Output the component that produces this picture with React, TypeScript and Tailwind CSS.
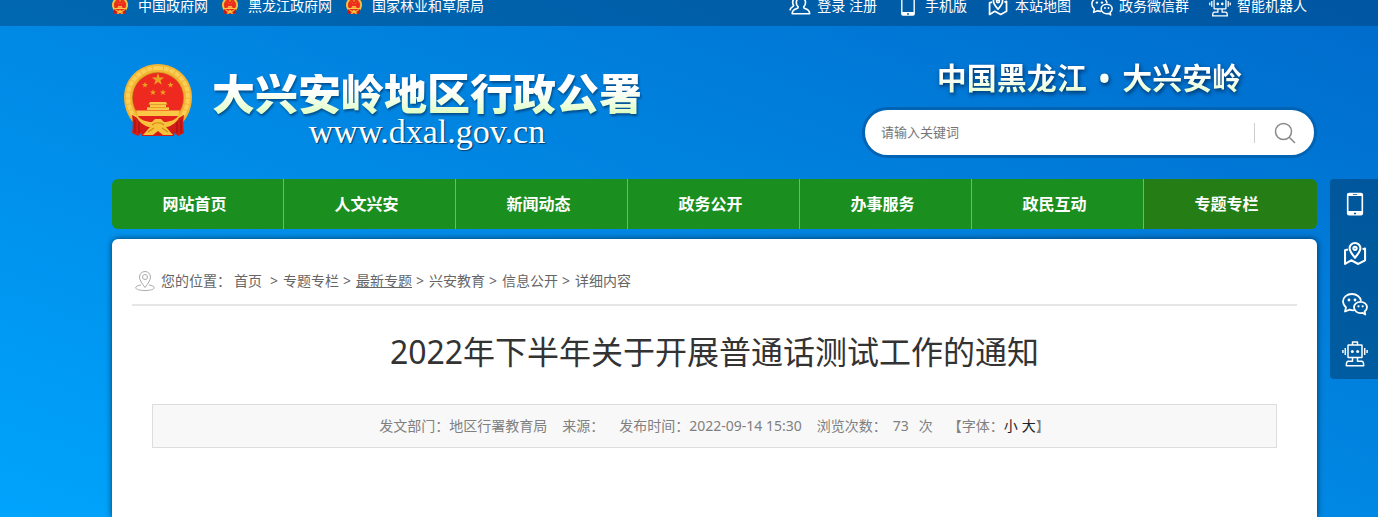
import React from "react";

const topLinks = ["中国政府网", "黑龙江政府网", "国家林业和草原局"];

const navItems = ["网站首页", "人文兴安", "新闻动态", "政务公开", "办事服务", "政民互动", "专题专栏"];

const crumbs = ["专题专栏", "最新专题", "兴安教育", "信息公开", "详细内容"];

type IconProps = { className?: string };

const star = (cx: number, cy: number, r: number) =>
  Array.from({ length: 10 }, (_, i) => {
    const radius = i % 2 === 0 ? r : r * 0.4;
    const angle = (Math.PI / 5) * i - Math.PI / 2;
    return `${cx + radius * Math.cos(angle)},${cy + radius * Math.sin(angle)}`;
  }).join(" ");

const Emblem = ({ className }: IconProps) => (
  <svg viewBox="0 0 68 74" className={className} aria-hidden="true">
    <path d="M34 0C53 0 68 15 68 33c0 13-6 24-15 31H15C6 57 0 46 0 33 0 15 15 0 34 0Z" fill="#f3b433" />
    <path d="M34 4C50 4 64 16 64 33c0 11-5 20-12 26M34 4C18 4 4 16 4 33c0 11 5 20 12 26" fill="none" stroke="#fbcf55" strokeWidth="4" strokeDasharray="5 1" />
    <circle cx="34" cy="34" r="26" fill="#c98a1c" />
    <circle cx="34" cy="34" r="25.3" fill="#ee2a20" />
    <polygon points={star(34, 15.5, 6.5)} fill="#e7a51f" />
    <polygon points={star(21, 21, 3.2)} fill="#e7a51f" />
    <polygon points={star(46.5, 21, 3.2)} fill="#e7a51f" />
    <polygon points={star(29, 28.5, 3.2)} fill="#e7a51f" />
    <polygon points={star(39, 28.5, 3.2)} fill="#e7a51f" />
    <path d="M26 38h16l1.5 2.5H42V43h3v3H23v-3h3v-2.500h-1.5Z" fill="#fbc744" />
    <path d="M25 40.500h18M23 43.500h22" stroke="#d98f22" strokeWidth=".7" />
    <path d="M12 46.500h44l-2 5.500H14Z" fill="#fbc744" />
    <path d="M14 52h40c-3 5-9 8-20 8s-17-3-20-8Z" fill="#e3221b" />
    <path d="M8 51c5 2 10 7 14 9-1 5-4 9-8 12l-6-3c1-6 1-12 0-18ZM60 51c-5 2-10 7-14 9 1 5 4 9 8 12l6-3c-1-6-1-12 0-18Z" fill="#d31c17" />
    <path d="M11 56v13M15 58v11M57 56v13M53 58v11" stroke="#8f0f12" strokeWidth=".8" />
    <path d="M16 60c6 3 12 3 18 3s12 0 18-3l-2 12H18Z" fill="#d31c17" />
    <path d="M12 51c5 5 10 7 16 7l3-3h6l3 3c6 0 11-2 16-7-2 7-8 11-14 12l7 8H39l-5-4-5 4H19l7-8c-6-1-12-5-14-12Z" fill="#f8c23c" />
    <path d="M28 61c3-3 9-3 12 0M24 68l6-4M44 68l-6-4" fill="none" stroke="#d18a1c" strokeWidth="1.2" />
  </svg>
);

const UserIcon = ({ className }: IconProps) => (
  <svg viewBox="0 0 24 24" className={className} fill="none" stroke="currentColor" strokeWidth="1.8" strokeLinejoin="round" aria-hidden="true">
    <path d="M10 13C7 10.500 7 3 13 3s6 7.500 3 10c0 1.200.5 1.600 2 2 3.500 1 4.500 2.500 4.500 5.500h-19c0-3 1-4.500 4.500-5.500 1.500-.4 2-.8 2-2Z" />
    <path d="M6.500 4C3.500 5 3.500 9 5 11.500c0 1.500-3 1.500-3.800 4.500" strokeLinecap="round" />
  </svg>
);

const PhoneIcon = ({ className }: IconProps) => (
  <svg viewBox="0 0 24 24" className={className} aria-hidden="true">
    <path fillRule="evenodd" fill="currentColor" d="M6.500 1.500h11a2 2 0 0 1 2 2v17a2 2 0 0 1-2 2h-11a2 2 0 0 1-2-2v-17a2 2 0 0 1 2-2ZM6 4.500V18.500h12v-14Zm4-1.700v.7h4v-.7ZM11 20v1.500h2V20Z" />
  </svg>
);

const MapIcon = ({ className }: IconProps) => (
  <svg viewBox="0 0 24 24" className={className} fill="none" stroke="currentColor" strokeWidth="1.900" strokeLinejoin="round" aria-hidden="true">
    <path d="M5.500 7.800 2.800 8.600v12.600l5.700-3.400 6.500 3.400 6.300-3.400V7l-2.300.7" />
    <path d="M12 15.500C9 12 7 9.300 7 6.800a5 5 0 0 1 10 0c0 2.500-2 5.200-5 8.700Z" />
    <circle cx="12" cy="6.800" r="1.500" />
  </svg>
);

const WechatIcon = ({ className }: IconProps) => (
  <svg viewBox="0 0 26 24" className={className} fill="none" stroke="currentColor" strokeWidth="1.800" strokeLinejoin="round" aria-hidden="true">
    <path d="M12.500 18.200c-1.600.3-3.200.1-4.700-.5L3 19.500l1-4C2.300 13.900 1 11.800 1 9.500 1 5.300 4.900 2 10 2c4.800 0 8.400 2.900 9 6.800" />
    <path d="M18.500 9.800c3.700 0 6.500 2.400 6.500 5.400 0 1.700-.9 3.200-2.400 4.300l.7 3-3-1.700c-4.500 1.100-8.300-1.700-8.300-5.600 0-3 2.800-5.400 6.500-5.400Z" />
    <g fill="currentColor" stroke="none">
      <circle cx="7" cy="8" r="1.400" />
      <circle cx="13" cy="8" r="1.400" />
      <circle cx="16.500" cy="14.300" r="1.100" />
      <circle cx="20.700" cy="14.300" r="1.100" />
    </g>
  </svg>
);

const RobotIcon = ({ className }: IconProps) => (
  <svg viewBox="0 0 26 26" className={className} fill="none" stroke="currentColor" strokeWidth="1.500" strokeLinejoin="round" aria-hidden="true">
    <rect x="6" y="4" width="14" height="12.500" rx=".5" />
    <path d="M10.500 4V1h5v3M3.300 7v7M22.700 7v7M.9 9v3M25.100 9v3" />
    <path d="M10.500 16.500v3.800H6.300c-1.300 0-2 1.500-2 4.500h17.400c0-3-.7-4.500-2-4.500h-4.200v-3.800" />
    <circle cx="10.300" cy="10.500" r="1.500" fill="currentColor" stroke="none" />
    <circle cx="15.700" cy="10.500" r="1.500" fill="currentColor" stroke="none" />
  </svg>
);

const PinIcon = ({ className }: IconProps) => (
  <svg viewBox="0 0 20 20" className={className} fill="none" stroke="currentColor" aria-hidden="true">
    <path d="M10 16.500C7 12.500 4.500 9 4.500 6a5.500 5.500 0 0 1 11 0c0 3-2.500 6.500-5.500 10.500Z" />
    <circle cx="10" cy="6" r="2.500" />
    <path d="M6 14c-3 .4-5.300 1.400-5.300 2.700 0 1.600 4 2.800 9.300 2.800s9.300-1.200 9.300-2.800c0-1.300-2.300-2.300-5.300-2.700" />
  </svg>
);

const SearchIcon = ({ className }: IconProps) => (
  <svg viewBox="0 0 22 22" className={className} fill="none" stroke="currentColor" strokeWidth="1.500" aria-hidden="true">
    <circle cx="9.500" cy="9.500" r="8" />
    <path d="m15 15 6 6" />
  </svg>
);

const serviceLinks = [
  { label: "手机版", Icon: PhoneIcon },
  { label: "本站地图", Icon: MapIcon },
  { label: "政务微信群", Icon: WechatIcon },
  { label: "智能机器人", Icon: RobotIcon },
];

const TopBar = () => (
  <div className="-mt-3.5 flex h-10 items-center justify-between bg-[#003864]/40 pl-28 pr-[71px] text-sm text-white">
    <div className="flex gap-3.5">
      {topLinks.map((label) => (
        <a key={label} href="#" className="flex items-center gap-2.5">
          <Emblem className="w-4" />
          {label}
        </a>
      ))}
    </div>
    <div className="flex gap-5">
      <div className="flex items-center gap-1.5">
        <UserIcon className="size-[22px]" />
        <span>
          <a href="#">登录</a> <a href="#">注册</a>
        </span>
      </div>
      {serviceLinks.map(({ label, Icon }) => (
        <a key={label} href="#" className="flex items-center gap-1.5">
          <Icon className="size-[22px]" />
          {label}
        </a>
      ))}
    </div>
  </div>
);

const Header = () => (
  <header className="flex justify-between pt-8 pb-[21px]">
    <a href="#" className="flex items-start gap-5 pt-1.5 pl-3">
      <Emblem className="w-[68px]" />
      <div className="pt-2.5 text-center text-white">
        <h1 className="bg-linear-to-b from-white from-40% to-[#dfffc4] bg-clip-text text-[43px] leading-10 font-black text-transparent drop-shadow-[1px_2px_1px_rgba(0,40,80,0.6)]">
          大兴安岭地区行政公署
        </h1>
        <p className="font-['Liberation_Serif',serif] text-[34px] leading-9 [text-shadow:1px_1px_1px_rgba(0,30,60,0.7)]">www.dxal.gov.cn</p>
      </div>
    </a>
    <div className="w-[455px]">
      <p className="bg-linear-to-b from-white from-40% to-[#dfffc4] bg-clip-text text-center text-3xl leading-10 font-bold text-transparent drop-shadow-[1px_2px_2px_rgba(0,30,70,0.8)]">
        中国黑龙江<span className="mx-3">•</span>大兴安岭
      </p>
      <form className="mt-[9px] flex h-[51px] items-center rounded-full border-3 border-[#0063b4] bg-white pl-4">
        <input
          type="text"
          aria-label="请输入关键词"
          placeholder="请输入关键词"
          className="min-w-0 grow text-[13px] outline-none placeholder:text-[#757575]"
        />
        <button type="button" aria-label="搜索" className="flex h-5 w-[60px] items-center justify-center border-l border-[#ccc] text-[#888]">
          <SearchIcon className="size-[22px]" />
        </button>
      </form>
    </div>
  </header>
);

const Nav = () => (
  <nav className="flex h-[50px] overflow-hidden rounded-md bg-[#1b8e20] font-bold text-white">
    {navItems.map((label, i) => (
      <a
        key={label}
        href="#"
        className={
          i === navItems.length - 1
            ? "flex flex-1 items-center justify-center bg-[#257e15] pr-2"
            : "flex flex-1 items-center justify-center border-r border-[#78b46c] pr-1.5"
        }
      >
        {label}
      </a>
    ))}
  </nav>
);

const Breadcrumb = () => (
  <div className="flex h-[67px] items-center gap-1.5 border-b-2 border-[#e6e6e6] pt-[19px] pl-[3px] text-sm text-[#666]">
    <PinIcon className="size-5 text-[#aaa]" />
    <div className="flex">
      <span className="mr-[3px]">您的位置：</span>
      <a href="#" className="mr-1">首页</a>
      {crumbs.map((label) => (
        <React.Fragment key={label}>
          <span className="mx-1 w-[9px]">&gt;</span>
          <a href="#" className={label === "最新专题" ? "underline" : ""}>
            {label}
          </a>
        </React.Fragment>
      ))}
    </div>
  </div>
);

const Article = () => (
  <main className="mt-2.5 grow rounded-t-md bg-white px-5 shadow-[0_0_6px_rgba(0,0,0,0.6)]">
    <Breadcrumb />
    <h2 className="mt-6 text-center text-[32px] leading-[44px] text-[#333]">2022年下半年关于开展普通话测试工作的通知</h2>
    <div className="mx-5 mt-[30px] flex h-11 items-center justify-center gap-[15px] border border-[#ddd] bg-[#f8f8f8] text-sm text-[#808080]">
      <span>发文部门：地区行署教育局</span>
      <span>来源：</span>
      <span>发布时间：2022-09-14 15:30</span>
      <span className="flex">
        浏览次数：<span className="mx-1.5">73</span>
        <span className="ml-1">次</span>
      </span>
      <span className="flex">
        【字体：
        <button type="button" className="mr-1 text-[#222]">小</button>
        <button type="button" className="text-[#222]">大</button>】
      </span>
    </div>
  </main>
);

const SideBar = () => (
  <aside className="fixed top-[179px] right-0 w-12 rounded-l bg-[#003864]/50 text-white">
    {serviceLinks.map(({ label, Icon }) => (
      <a key={label} href="#" aria-label={label} className="flex h-[50px] items-center justify-center pl-0.5">
        <Icon className="size-[26px]" />
      </a>
    ))}
  </aside>
);

export default function App() {
  return (
    <div className="flex min-h-screen flex-col overflow-hidden bg-linear-to-tr from-[#00a4fc] to-[#006bcb] font-['Noto_Sans','Noto_Sans_CJK_SC',sans-serif]">
      <TopBar />
      <div className="ml-28 mr-[61px] flex grow flex-col">
        <Header />
        <Nav />
        <Article />
      </div>
      <SideBar />
    </div>
  );
}
